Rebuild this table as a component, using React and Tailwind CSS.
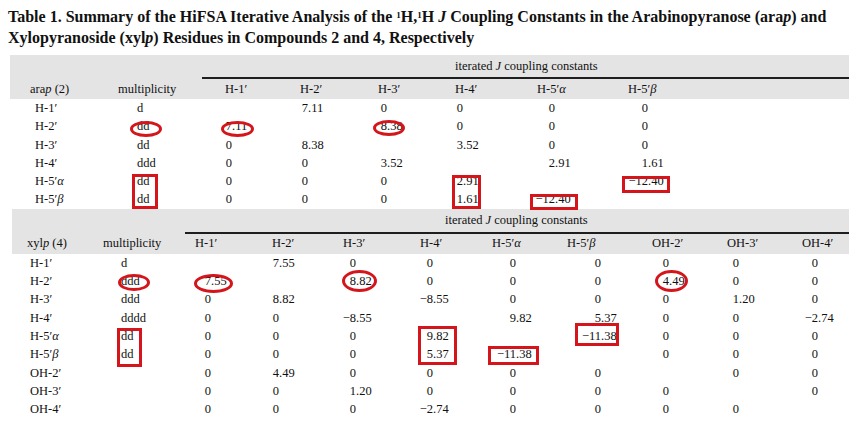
import React from "react";

const M = "−";

const arap = [
  ["H-1′", "d", "", "7.11", "0", "0", "0", "0"],
  ["H-2′", "dd", "7.11", "", "8.38", "0", "0", "0"],
  ["H-3′", "dd", "0", "8.38", "", "3.52", "0", "0"],
  ["H-4′", "ddd", "0", "0", "3.52", "", "2.91", "1.61"],
  ["H-5′α", "dd", "0", "0", "0", "2.91", "", M + "12.40"],
  ["H-5′β", "dd", "0", "0", "0", "1.61", M + "12.40", ""],
];

const xylp = [
  ["H-1′", "d", "", "7.55", "0", "0", "0", "0", "0", "0", "0"],
  ["H-2′", "ddd", "7.55", "", "8.82", "0", "0", "0", "4.49", "0", "0"],
  ["H-3′", "ddd", "0", "8.82", "", M + "8.55", "0", "0", "0", "1.20", "0"],
  ["H-4′", "dddd", "0", "0", M + "8.55", "", "9.82", "5.37", "0", "0", M + "2.74"],
  ["H-5′α", "dd", "0", "0", "0", "9.82", "", M + "11.38", "0", "0", "0"],
  ["H-5′β", "dd", "0", "0", "0", "5.37", M + "11.38", "", "0", "0", "0"],
  ["OH-2′", "", "0", "4.49", "0", "0", "0", "0", "", "0", "0"],
  ["OH-3′", "", "0", "0", "1.20", "0", "0", "0", "0", "", "0"],
  ["OH-4′", "", "0", "0", "0", M + "2.74", "0", "0", "0", "0", ""],
];

// where the integer part ends, measured from the column's left edge
const T1_INT = ["w-[7px]", "w-[8px]", "w-[9px]", "w-[8px]", "w-[18px]", "w-[20px]"];
const T2_INT = ["w-[16px]", "w-[7px]", "w-[13px]", "w-[13px]", "w-[24px]", "w-[34px]", "w-[17px]", "w-[12px]", "w-[16px]"];

const T1_HEAD = ["H-1′", "H-2′", "H-3′", "H-4′", "H-5′α", "H-5′β"];
const T2_HEAD = ["H-1′", "H-2′", "H-3′", "H-4′", "H-5′α", "H-5′β", "OH-2′", "OH-3′", "OH-4′"];

const MARKS = [
  "left-[130px] top-[121px] w-[32px] h-[16px] rounded-[50%]",
  "left-[221px] top-[121px] w-[33px] h-[16px] rounded-[50%]",
  "left-[373px] top-[120px] w-[32px] h-[16px] rounded-[50%]",
  "left-[132px] top-[174px] w-[26px] h-[35px]",
  "left-[452px] top-[175px] w-[29px] h-[34px]",
  "left-[622px] top-[176px] w-[48px] h-[17px]",
  "left-[530px] top-[194px] w-[48px] h-[16px]",
  "left-[118px] top-[274px] w-[32px] h-[17px] rounded-[50%]",
  "left-[194px] top-[274px] w-[39px] h-[19px] rounded-[50%]",
  "left-[342px] top-[270px] w-[35px] h-[22px] rounded-[50%]",
  "left-[655px] top-[270px] w-[33px] h-[22px] rounded-[50%]",
  "left-[117px] top-[328px] w-[25px] h-[39px]",
  "left-[418px] top-[326px] w-[39px] h-[39px]",
  "left-[575px] top-[323px] w-[44px] h-[23px]",
  "left-[488px] top-[346px] w-[51px] h-[19px]",
];

function Label({ text }) {
  const m = text.match(/^(.*′)([αβ])$/);
  if (!m) return text;
  return (
    <>
      {m[1]}
      <i>{m[2]}</i>
    </>
  );
}

function Num({ value, intW }) {
  if (!value) return <span />;
  const [int, frac] = value.split(".");
  return (
    <span className="flex whitespace-nowrap">
      <span className={`flex shrink-0 justify-end ${intW}`}>{int}</span>
      {frac && <span>.{frac}</span>}
    </span>
  );
}

function Table({ cols, name, gray, iterPad, linePad, topH, headH, labelPad, labelHeadPad, multPad, heads, ints, rows }) {
  return (
    <div className={gray}>
      <div className="bg-[#e4e4e4]">
        <div className={`flex items-center ${topH} ${iterPad}`}>
          iterated&nbsp;<i>J</i>&nbsp;coupling constants
        </div>
        <div className={`h-[2px] bg-[#1e1e1e] ${linePad}`} />
        <div className={`grid items-center ${cols} ${headH}`}>
          <div className={labelHeadPad}>{name}</div>
          <div>multiplicity</div>
          {heads.map((h) => (
            <div key={h}>
              <Label text={h} />
            </div>
          ))}
        </div>
      </div>
      {rows.map((r) => (
        <div key={r[0]} className={`grid items-center h-[18.3px] ${cols}`}>
          <div className={labelPad}>
            <Label text={r[0]} />
          </div>
          <div className={multPad}>{r[1]}</div>
          {r.slice(2).map((v, i) => (
            <Num key={i} value={v} intW={ints[i]} />
          ))}
        </div>
      ))}
    </div>
  );
}

export default function App() {
  return (
    <div className="relative w-[856px] h-[424px] overflow-hidden bg-white font-['Liberation_Serif',serif] text-[12.5px] text-[#111]">
      <div className="pl-[8px] pt-[6px] text-[16px] font-bold leading-[21px] text-[#111] whitespace-nowrap">
        Table 1. Summary of the HiFSA Iterative Analysis of the <sup className="text-[9px]">1</sup>H,
        <sup className="text-[9px]">1</sup>H <i>J</i> Coupling Constants in the Arabinopyranose (ara<i>p</i>) and
        <br />
        Xylopyranoside (xyl<i>p</i>) Residues in Compounds 2 and 4, Respectively
      </div>

      <div className="mt-[7px]">
        <Table
          gray="ml-[10px] w-[839px]"
          cols="grid-cols-[108px_107px_75px_78px_77px_82px_91px_1fr]"
          name={<>ara<i>p</i> (2)</>}
          iterPad="pl-[445px]"
          linePad="ml-[192px]"
          topH="h-[22px]"
          headH="h-[20px]"
          labelHeadPad="pl-[20px]"
          labelPad="pl-[25px]"
          multPad="pl-[19px]"
          heads={T1_HEAD}
          ints={T1_INT}
          rows={arap}
        />
        <Table
          gray="ml-[12px] w-[837px]"
          cols="grid-cols-[91px_92px_77px_71px_77px_72px_75px_85px_75px_75px_1fr]"
          name={<>xyl<i>p</i> (4)</>}
          iterPad="pl-[433px]"
          linePad="ml-[173px]"
          topH="h-[23px]"
          headH="h-[20px]"
          labelHeadPad="pl-[15px]"
          labelPad="pl-[18px]"
          multPad="pl-[18px]"
          heads={T2_HEAD}
          ints={T2_INT}
          rows={xylp}
        />
      </div>

      {MARKS.map((m) => (
        <span key={m} className={`absolute border-[3px] border-[#d4161c] ${m}`} />
      ))}
    </div>
  );
}
